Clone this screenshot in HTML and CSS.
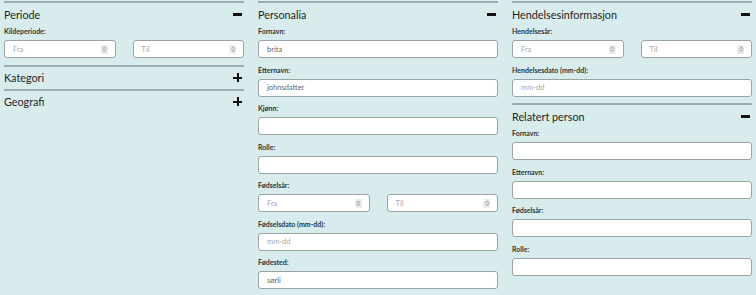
FILE: index.html
```html
<!DOCTYPE html>
<html lang="no">
<head>
  <meta charset="UTF-8">
  <meta name="viewport" content="width=device-width, initial-scale=1.0">
  <title>Søk</title>
  <link rel="stylesheet" href="styles.css">
</head>
<body>
  <div class="columns">
    <div class="column">
      <section class="section">
        <div class="section-head">
          <h2>Periode</h2>
          <span class="toggle minus"></span>
        </div>
        <div class="field">
          <label>Kildeperiode:</label>
          <div class="pair">
            <div class="box"><span class="placeholder">Fra</span><span class="spin"></span></div>
            <div class="box"><span class="placeholder">Til</span><span class="spin"></span></div>
          </div>
        </div>
      </section>
      <section class="section collapsed">
        <div class="section-head">
          <h2>Kategori</h2>
          <span class="toggle plus"></span>
        </div>
      </section>
      <section class="section collapsed">
        <div class="section-head">
          <h2>Geografi</h2>
          <span class="toggle plus"></span>
        </div>
      </section>
    </div>

    <div class="column">
      <section class="section">
        <div class="section-head">
          <h2>Personalia</h2>
          <span class="toggle minus"></span>
        </div>
        <div class="field">
          <label>Fornavn:</label>
          <div class="box"><span class="value">brita</span></div>
        </div>
        <div class="field">
          <label>Etternavn:</label>
          <div class="box"><span class="value">johnsdatter</span></div>
        </div>
        <div class="field">
          <label>Kjønn:</label>
          <div class="box"></div>
        </div>
        <div class="field">
          <label>Rolle:</label>
          <div class="box"></div>
        </div>
        <div class="field">
          <label>Fødselsår:</label>
          <div class="pair">
            <div class="box"><span class="placeholder">Fra</span><span class="spin"></span></div>
            <div class="box"><span class="placeholder">Til</span><span class="spin"></span></div>
          </div>
        </div>
        <div class="field">
          <label>Fødselsdato (mm-dd):</label>
          <div class="box"><span class="placeholder">mm-dd</span></div>
        </div>
        <div class="field">
          <label>Fødested:</label>
          <div class="box"><span class="value">sørli</span></div>
        </div>
      </section>
    </div>

    <div class="column">
      <section class="section">
        <div class="section-head">
          <h2>Hendelsesinformasjon</h2>
          <span class="toggle minus"></span>
        </div>
        <div class="field">
          <label>Hendelsesår:</label>
          <div class="pair">
            <div class="box"><span class="placeholder">Fra</span><span class="spin"></span></div>
            <div class="box"><span class="placeholder">Til</span><span class="spin"></span></div>
          </div>
        </div>
        <div class="field">
          <label>Hendelsesdato (mm-dd):</label>
          <div class="box"><span class="placeholder">mm-dd</span></div>
        </div>
      </section>
      <section class="section">
        <div class="section-head">
          <h2>Relatert person</h2>
          <span class="toggle minus"></span>
        </div>
        <div class="field">
          <label>Fornavn:</label>
          <div class="box"></div>
        </div>
        <div class="field">
          <label>Etternavn:</label>
          <div class="box"></div>
        </div>
        <div class="field">
          <label>Fødselsår:</label>
          <div class="box"></div>
        </div>
        <div class="field">
          <label>Rolle:</label>
          <div class="box"></div>
        </div>
      </section>
    </div>
  </div>
</body>
</html>
```

FILE: styles.css
```css
body {
  margin: 0;
  padding: 0;
  background-color: #d9eced;
  font-family: Lato, "Open Sans", sans-serif;
  color: #222;
}
.columns {
  display: grid;
  grid-template-columns: repeat(3, 1fr);
  gap: 14px;
  padding: 1px 4px 0 4px;
}
.section {
  border-top: 2px solid #9cacaf;
  padding-bottom: 1px;
}
.section.collapsed {
  padding-bottom: 0;
}
.section-head {
  display: flex;
  justify-content: space-between;
  align-items: center;
  height: 22px;
}
.section-head h2 {
  margin: 0;
  font-size: 10.8px;
  font-weight: 400;
  color: #1e1e1e;
}
.toggle {
  position: relative;
  width: 9px;
  height: 9px;
  margin-right: 2px;
}
.toggle::before,
.toggle::after {
  content: "";
  position: absolute;
  background: #111;
}
.toggle::before {
  left: 0;
  right: 0;
  top: 3.5px;
  height: 2.5px;
}
.plus::after {
  top: 0;
  bottom: 0;
  left: 3.5px;
  width: 2.5px;
}
.field {
  margin-bottom: 5.5px;
}
.field label {
  display: block;
  height: 12px;
  line-height: 12px;
  margin-bottom: 3px;
  font-size: 7px;
  font-weight: 700;
  color: #2e3436;
}
.pair {
  display: grid;
  grid-template-columns: 1fr 1fr;
  gap: 17px;
}
.box {
  display: flex;
  align-items: center;
  justify-content: space-between;
  height: 18px;
  box-sizing: border-box;
  padding: 0 7px 0 8px;
  background: #fff;
  border: 1px solid #9aa3a5;
  border-radius: 3px;
  font-size: 7.5px;
}
.value {
  color: #666;
}
.placeholder {
  color: #a8a8a8;
}
.spin {
  width: 7px;
  height: 9px;
  border-radius: 1px;
  background: #ebebeb;
  position: relative;
}
.spin::before,
.spin::after {
  content: "";
  position: absolute;
  left: 2.5px;
  width: 1.5px;
  height: 1.5px;
  border-left: 0.6px solid #b0b0b0;
  border-top: 0.6px solid #b0b0b0;
}
.spin::before {
  top: 2px;
  transform: rotate(45deg);
}
.spin::after {
  bottom: 2px;
  transform: rotate(225deg);
}
```
